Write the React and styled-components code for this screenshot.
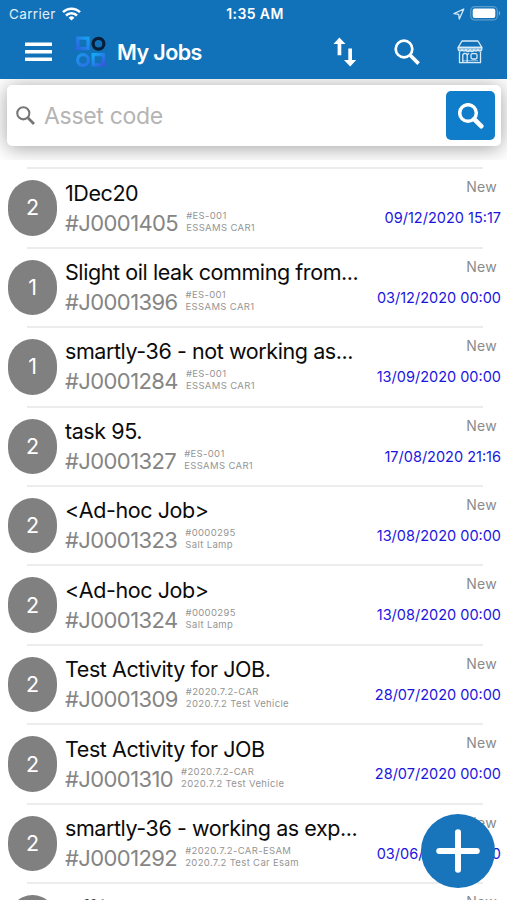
import React from 'react'
import styled, { createGlobalStyle } from 'styled-components'

const jobs = [
  { count: 2, title: '1Dec20', code: '#J0001405', asset: '#ES-001', name: 'ESSAMS CAR1', date: '09/12/2020 15:17' },
  { count: 1, title: 'Slight oil leak comming from...', code: '#J0001396', asset: '#ES-001', name: 'ESSAMS CAR1', date: '03/12/2020 00:00' },
  { count: 1, title: 'smartly-36 - not working as...', code: '#J0001284', asset: '#ES-001', name: 'ESSAMS CAR1', date: '13/09/2020 00:00' },
  { count: 2, title: 'task 95.', code: '#J0001327', asset: '#ES-001', name: 'ESSAMS CAR1', date: '17/08/2020 21:16' },
  { count: 2, title: '<Ad-hoc Job>', code: '#J0001323', asset: '#0000295', name: 'Salt Lamp', date: '13/08/2020 00:00' },
  { count: 2, title: '<Ad-hoc Job>', code: '#J0001324', asset: '#0000295', name: 'Salt Lamp', date: '13/08/2020 00:00' },
  { count: 2, title: 'Test Activity for JOB.', code: '#J0001309', asset: '#2020.7.2-CAR', name: '2020.7.2 Test Vehicle', date: '28/07/2020 00:00' },
  { count: 2, title: 'Test Activity for JOB', code: '#J0001310', asset: '#2020.7.2-CAR', name: '2020.7.2 Test Vehicle', date: '28/07/2020 00:00' },
  { count: 2, title: 'smartly-36 - working as exp...', code: '#J0001292', asset: '#2020.7.2-CAR-ESAM', name: '2020.7.2 Test Car Esam', date: '03/06/2020 10:00' },
  { count: '', title: 'Offline d' },
]

const WifiIcon = () => (
  <svg width="19" height="14" viewBox="0 0 19 14" fill="none" stroke="#fff" strokeWidth="2.5">
    <path d="M1 5.2a12 12 0 0 1 17 0" />
    <path d="M4 8.5a7.8 7.8 0 0 1 11 0" />
    <path d="M9.5 13.6L6.6 10.7a4.1 4.1 0 0 1 5.8 0z" fill="#fff" stroke="none" />
  </svg>
)

const LocationIcon = () => (
  <svg width="12" height="12" viewBox="0 0 12 12" fill="none" stroke="#d5e8f6" strokeWidth="1.3" strokeLinejoin="round">
    <path d="M10.8 1L1 5.6l4.7.7.6 4.7z" />
  </svg>
)

const BatteryIcon = () => (
  <svg width="31" height="15" viewBox="0 0 31 15">
    <rect x="0.7" y="0.7" width="26.6" height="13.2" rx="4" fill="none" stroke="#5a9ccd" strokeWidth="1.2" />
    <rect x="2.7" y="2.6" width="22.6" height="9.4" rx="2" fill="#fff" />
    <path d="M28.8 5c1.8.7 1.8 3.9 0 4.6z" fill="#76afd8" />
  </svg>
)

const MenuIcon = () => (
  <svg width="27" height="20" viewBox="0 0 27 20" fill="#fff">
    <rect width="27" height="3.6" y="0.5" rx="0.5" />
    <rect width="27" height="3.6" y="8" rx="0.5" />
    <rect width="27" height="3.6" y="15.5" rx="0.5" />
  </svg>
)

const Logo = () => (
  <svg width="32" height="32" viewBox="0 0 32 32" fill="none" strokeWidth="3.2">
    <defs>
      <linearGradient id="tile" x1="0" y1="1" x2="1" y2="0">
        <stop offset="0" stopColor="#2b66e2" />
        <stop offset="1" stopColor="#18a0f0" />
      </linearGradient>
      <linearGradient id="ring" x1="0" y1="0" x2="1" y2="1">
        <stop offset="0" stopColor="#1c96ea" />
        <stop offset="1" stopColor="#2c6fe6" />
      </linearGradient>
      <linearGradient id="tile2" x1="0" y1="0" x2="1" y2="1">
        <stop offset="0" stopColor="#14a8f5" />
        <stop offset="1" stopColor="#3558dc" />
      </linearGradient>
    </defs>
    <rect x="2.7" y="2.2" width="10.3" height="10.3" stroke="url(#tile)" />
    <circle cx="23.5" cy="7.8" r="5.4" stroke="#071d38" />
    <circle cx="8" cy="24" r="5.4" stroke="url(#ring)" />
    <rect x="18.2" y="18.6" width="10.3" height="10.3" stroke="url(#tile2)" />
  </svg>
)

const SortIcon = () => (
  <svg width="24" height="30" viewBox="0 0 24 30" fill="#fff">
    <path d="M6.4.5L12.5 7H8.3v11.3H4.6V7H.5z" />
    <path d="M17.2 29.5L11 23h4.3V11.5H19V23h4.2z" />
  </svg>
)

const SearchIcon = ({ size, color, weight = 2.2, round }) => (
  <svg width={size} height={size} viewBox="0 0 26 26" fill="none" stroke={color} strokeWidth={weight}>
    <circle cx="10" cy="10" r="8.3" />
    <path d={round ? 'M16.2 16.2l7 7' : 'M16.2 16.2l8.4 8.4'} strokeWidth={weight * 1.35} strokeLinecap={round ? 'round' : 'butt'} />
  </svg>
)

const StoreIcon = () => (
  <svg width="26" height="24" viewBox="0 0 26 24" fill="none" stroke="#d9ebf7" strokeWidth="1.3" strokeLinejoin="round">
    <path d="M5 1h16l3.8 6.3H1.2z" />
    <path d="M1.2 7.3v2.2a2 2 0 0 0 3.9 0 2 2 0 0 0 3.9 0 2 2 0 0 0 4 0 2 2 0 0 0 4 0 2 2 0 0 0 3.9 0 2 2 0 0 0 3.9 0V7.3z" fill="#8fc0e3" />
    <path d="M2.5 11.8v10.9h21V11.8" />
    <path d="M5.8 22.5v-7a2 2 0 0 1 4.4 0v7M10.2 22v-6.5a1.8 1.8 0 0 1 2-1.8" />
    <rect x="14" y="13.7" width="6" height="5.3" rx="1.4" />
    <path d="M5 20.8h16" strokeWidth="0.7" />
  </svg>
)

export default function App() {
  return (
    <Page>
      <GlobalStyle />
      <Header>
        <StatusBar>
          <Carrier>Carrier <WifiIcon /></Carrier>
          <Clock>1:35 AM</Clock>
          <StatusIcons><LocationIcon /><BatteryIcon /></StatusIcons>
        </StatusBar>
        <Toolbar>
          <MenuIcon />
          <Brand><Logo /></Brand>
          <Title>My Jobs</Title>
          <Actions>
            <SortIcon />
            <SearchIcon size={26} color="#fff" weight={2.7} />
            <StoreIcon />
          </Actions>
        </Toolbar>
      </Header>
      <SearchArea>
        <SearchBox>
          <SearchIcon size={19} color="#767676" weight={2.8} />
          <Placeholder>Asset code</Placeholder>
          <SearchButton><SearchIcon size={26} color="#fff" weight={3.5} round /></SearchButton>
        </SearchBox>
      </SearchArea>
      <JobList>
        {jobs.map((job) => (
          <Job key={job.title + job.code}>
            <Badge>{job.count}</Badge>
            <Details>
              <JobTitle>{job.title}</JobTitle>
              {job.code && (
                <CodeLine>
                  <Code>{job.code}</Code>
                  <Asset>
                    <div>{job.asset}</div>
                    <div>{job.name}</div>
                  </Asset>
                </CodeLine>
              )}
            </Details>
            <Side>
              <Status>New</Status>
              {job.date && <DateText>{job.date}</DateText>}
            </Side>
          </Job>
        ))}
      </JobList>
      <AddButton>
        <svg width="44" height="44" viewBox="0 0 44 44" stroke="#fff" strokeWidth="6" strokeLinecap="round">
          <path d="M22 3.2v37.6M3.2 22h37.6" />
        </svg>
      </AddButton>
    </Page>
  )
}

const GlobalStyle = createGlobalStyle`
  * {
    box-sizing: border-box;
  }
  body {
    margin: 0;
    background: #fff;
    font-family: Inter, "Liberation Sans", sans-serif;
  }
  svg {
    display: block;
    flex: none;
  }
`

const Page = styled.div`
  position: relative;
  width: 507px;
  height: 900px;
  overflow: hidden;
  display: flex;
  flex-direction: column;
  background: #fff;
`

const Header = styled.header`
  flex: none;
  height: 79px;
  background: #1272b9;
  color: #fff;
`

const StatusBar = styled.div`
  height: 27px;
  display: grid;
  grid-template-columns: 1fr auto 1fr;
  align-items: center;
  padding: 0 6px 0 9px;
  font-size: 13.5px;
`

const Carrier = styled.div`
  display: flex;
  align-items: center;
  gap: 6px;
  letter-spacing: 0.35px;
  color: #e3eff8;
`

const Clock = styled.div`
  font-size: 14px;
  font-weight: 600;
  letter-spacing: 0.4px;
`

const StatusIcons = styled.div`
  display: flex;
  align-items: center;
  justify-content: flex-end;
  gap: 5px;
`

const Toolbar = styled.div`
  height: 50px;
  display: flex;
  align-items: center;
  padding: 0 24px 0 25px;
`

const Brand = styled.div`
  margin-left: 23px;
`

const Title = styled.h1`
  margin: 0 0 0 10px;
  font-size: 21.5px;
  font-weight: 600;
  letter-spacing: -0.6px;
`

const Actions = styled.div`
  margin-left: auto;
  display: flex;
  align-items: center;
  gap: 37px;
`

const SearchArea = styled.div`
  flex: none;
  height: 81px;
  padding: 6px 6px 0 7px;
  overflow: hidden;
`

const SearchBox = styled.div`
  height: 61px;
  display: flex;
  align-items: center;
  padding: 0 6px 0 9px;
  border-radius: 5px;
  background: #fff;
  box-shadow: 0 2px 20px rgba(0, 0, 0, 0.38);
`

const Placeholder = styled.div`
  flex: 1;
  margin-left: 9px;
  font-size: 23px;
  letter-spacing: -0.3px;
  color: #b4b4b4;
`

const SearchButton = styled.div`
  width: 49px;
  height: 49px;
  display: flex;
  align-items: center;
  justify-content: center;
  border-radius: 5px;
  background: #107dcb;
`

const JobList = styled.div`
  padding-top: 7.2px;
`

const Job = styled.div`
  height: 79.45px;
  display: flex;
  padding: 0 6px 0 8px;
  background: linear-gradient(#ececec, #ececec) 27px 0 / 456px 2px no-repeat;
`

const Badge = styled.div`
  flex: none;
  width: 49px;
  height: 55.5px;
  margin-top: 13px;
  padding-bottom: 1px;
  display: flex;
  align-items: center;
  justify-content: center;
  border-radius: 24.5px / 26px;
  background: #808080;
  color: #fff;
  font-size: 21.5px;
`

const Details = styled.div`
  flex: 1;
  min-width: 0;
  padding: 10.4px 0 0 8px;
  white-space: nowrap;
`

const JobTitle = styled.div`
  height: 30px;
  line-height: 30px;
  font-size: 21.5px;
  letter-spacing: -0.42px;
  color: #0b0b0b;
`

const CodeLine = styled.div`
  height: 30px;
  display: flex;
  align-items: center;
  gap: 8px;
`

const Code = styled.div`
  font-size: 22px;
  letter-spacing: -0.6px;
  color: #858585;
`

const Asset = styled.div`
  padding-bottom: 2px;
  font-size: 9.5px;
  line-height: 12px;
  letter-spacing: 0.35px;
  color: #959595;
`

const Side = styled.div`
  flex: none;
  display: flex;
  flex-direction: column;
  align-items: flex-end;
  white-space: nowrap;
`

const Status = styled.div`
  margin: 11px 4px 0 0;
  font-size: 14px;
  line-height: 18px;
  letter-spacing: 0.3px;
  color: #8b8b8b;
`

const DateText = styled.div`
  margin-top: 13px;
  font-size: 14.5px;
  line-height: 18px;
  color: #1a16de;
`

const AddButton = styled.div`
  position: absolute;
  right: 12px;
  bottom: 12px;
  width: 74px;
  height: 74px;
  display: flex;
  align-items: center;
  justify-content: center;
  border-radius: 50%;
  background: #1875bb;
`
